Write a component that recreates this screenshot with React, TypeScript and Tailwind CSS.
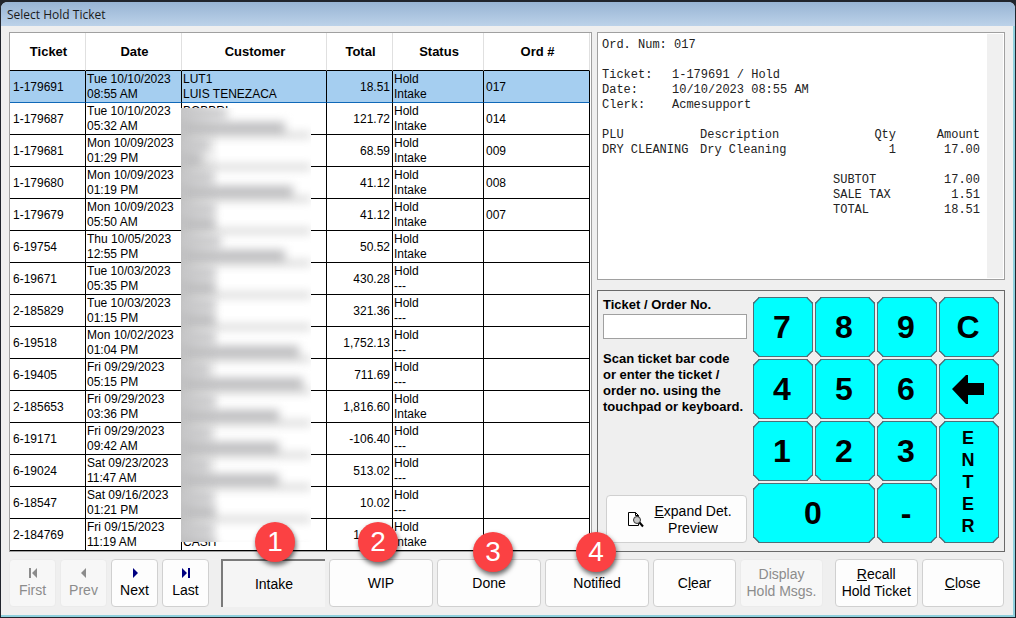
import { Fragment } from "react";
import type { ReactNode } from "react";

interface Ticket {
    id: string;
    day: string;
    time: string;
    customer?: string[];
    total: string;
    stage: string;
    order: string;
}

const tickets: Ticket[] = [
    { id: "1-179691", day: "Tue 10/10/2023", time: "08:55 AM", customer: ["LUT1", "LUIS TENEZACA"], total: "18.51", stage: "Intake", order: "017" },
    { id: "1-179687", day: "Tue 10/10/2023", time: "05:32 AM", customer: ["BOBBRI", ""], total: "121.72", stage: "Intake", order: "014" },
    { id: "1-179681", day: "Mon 10/09/2023", time: "01:29 PM", total: "68.59", stage: "Intake", order: "009" },
    { id: "1-179680", day: "Mon 10/09/2023", time: "01:19 PM", total: "41.12", stage: "Intake", order: "008" },
    { id: "1-179679", day: "Mon 10/09/2023", time: "05:50 AM", total: "41.12", stage: "Intake", order: "007" },
    { id: "6-19754", day: "Thu 10/05/2023", time: "12:55 PM", total: "50.52", stage: "Intake", order: "" },
    { id: "6-19671", day: "Tue 10/03/2023", time: "05:35 PM", total: "430.28", stage: "---", order: "" },
    { id: "2-185829", day: "Tue 10/03/2023", time: "01:15 PM", total: "321.36", stage: "---", order: "" },
    { id: "6-19518", day: "Mon 10/02/2023", time: "01:04 PM", total: "1,752.13", stage: "---", order: "" },
    { id: "6-19405", day: "Fri 09/29/2023", time: "05:15 PM", total: "711.69", stage: "---", order: "" },
    { id: "2-185653", day: "Fri 09/29/2023", time: "03:36 PM", total: "1,816.60", stage: "Intake", order: "" },
    { id: "6-19171", day: "Fri 09/29/2023", time: "09:42 AM", total: "-106.40", stage: "---", order: "" },
    { id: "6-19024", day: "Sat 09/23/2023", time: "11:47 AM", total: "513.02", stage: "---", order: "" },
    { id: "6-18547", day: "Sat 09/16/2023", time: "01:21 PM", total: "10.02", stage: "---", order: "" },
    { id: "2-184769", day: "Fri 09/15/2023", time: "11:19 AM", customer: ["", "CASH"], total: "100.00", stage: "Intake", order: "" },
];

// Redacted customer names: width of each smudged line, one pair per row
const smudges = [
    [46, 104], [28, 20], [32, 112], [34, 34], [40, 104], [34, 34], [34, 34],
    [34, 118], [28, 122], [34, 98], [30, 98], [28, 98], [32, 34], [32, 34],
];

const columns = [
    { label: "Ticket", width: "w-[76px]" },
    { label: "Date", width: "w-[96px]" },
    { label: "Customer", width: "w-[145px]" },
    { label: "Total", width: "w-[66px]" },
    { label: "Status", width: "w-[91px]" },
    { label: "Ord #", width: "w-[106px]" },
];

function TicketTable() {
    return (
        <div className="relative border border-[#a0a0a0] bg-white pr-px">
            <table className="w-full table-fixed border-separate border-spacing-0 text-xs leading-[15px]">
                <thead>
                    <tr className="h-[38px]">
                        {columns.map((c) => (
                            <th key={c.label} scope="col" className={`${c.width} border-r border-b border-r-[#e0e0e0] border-b-black pl-[2px] text-[13px] font-bold`}>
                                {c.label}
                            </th>
                        ))}
                    </tr>
                </thead>
                <tbody>
                    {tickets.map((t, i) => {
                        const cell = `h-8 overflow-hidden border-r border-b border-r-black whitespace-nowrap ${i === 0 ? "border-b-[#1068b8] bg-[#a5cef0]" : "border-b-black"}`;
                        return (
                            <tr key={t.id}>
                                <td className={`${cell} pt-[2px] pl-[3px]`}>{t.id}</td>
                                <td className={`${cell} pl-px`}>{t.day}<br />{t.time}</td>
                                <td className={`${cell} pt-px pl-px align-top`}>
                                    {t.customer?.map((line, n) => (
                                        <div key={n} className="h-[15px]">{line}</div>
                                    ))}
                                </td>
                                <td className={`${cell} pt-[2px] pr-[2px] text-right`}>{t.total}</td>
                                <td className={`${cell} pl-px`}>Hold<br />{t.stage}</td>
                                <td className={`${cell} pt-[2px] pl-[2px]`}>{t.order}</td>
                            </tr>
                        );
                    })}
                </tbody>
            </table>

            {/* Privacy smudge over the customer names */}
            <div className="absolute top-[75px] bottom-[9px] left-[171px] w-[130px] overflow-hidden bg-white" aria-hidden="true">
                <div className="absolute inset-y-0 left-0 w-10 bg-linear-to-r from-[#b4b4b4] to-transparent opacity-80" />
                {smudges.map(([a, b], i) => (
                    <div key={i} className="relative h-8 blur-[5px]">
                        <div className="h-[10px] bg-[#c6c6c8]" style={{ width: a }} />
                        <div className="mt-1 h-[10px] bg-[#bcbcbe]" style={{ width: b }} />
                        <div className="mt-px h-1 bg-[#c4c4c4]" />
                    </div>
                ))}
            </div>
        </div>
    );
}

function Receipt() {
    const info = [
        ["Ticket:", "1-179691 / Hold"],
        ["Date:", "10/10/2023 08:55 AM"],
        ["Clerk:", "Acmesupport"],
    ];
    const sums = [
        ["SUBTOT", "17.00"],
        ["SALE TAX", "1.51"],
        ["TOTAL", "18.51"],
    ];

    return (
        <div className="flex h-[248px] border border-[#a0a0a0] bg-white p-px font-['Liberation_Mono',monospace] text-xs leading-[15px] text-[#222]">
            <div className="flex-1 pt-1 pr-[7px] pl-[3px]">
                <p>Ord. Num: 017</p>
                <dl className="mt-[15px] grid grid-cols-[70px_1fr]">
                    {info.map(([k, v]) => (
                        <Fragment key={k}>
                            <dt>{k}</dt>
                            <dd>{v}</dd>
                        </Fragment>
                    ))}
                </dl>
                <table className="mt-[15px] w-full">
                    <thead>
                        <tr className="text-left">
                            <th className="w-[98px] p-0 font-normal">PLU</th>
                            <th className="p-0 font-normal">Description</th>
                            <th className="p-0 text-right font-normal">Qty</th>
                            <th className="w-[84px] p-0 text-right font-normal">Amount</th>
                        </tr>
                    </thead>
                    <tbody>
                        <tr>
                            <td className="p-0 whitespace-nowrap">DRY CLEANING</td>
                            <td className="p-0">Dry Cleaning</td>
                            <td className="p-0 text-right">1</td>
                            <td className="p-0 text-right">17.00</td>
                        </tr>
                    </tbody>
                </table>
                <dl className="mt-[15px] ml-auto grid w-[147px] grid-cols-[1fr_auto]">
                    {sums.map(([k, v]) => (
                        <Fragment key={k}>
                            <dt>{k}</dt>
                            <dd className="text-right">{v}</dd>
                        </Fragment>
                    ))}
                </dl>
            </div>
            <div className="w-4 bg-[#f0f0f0]" />
        </div>
    );
}

function Key({ children, label, className = "h-[60px] text-[32px]" }: { children: ReactNode; label?: string; className?: string }) {
    return (
        <button
            type="button"
            aria-label={label}
            className={`flex items-center justify-center rounded-[6px] border border-[#4d6f78] bg-[#00ffff] pr-[2px] font-bold text-black [corner-shape:bevel] ${className}`}
        >
            {children}
        </button>
    );
}

function Keypad() {
    return (
        <div className="grid w-[246px] shrink-0 grid-cols-4 gap-[2px]">
            <Key>7</Key>
            <Key>8</Key>
            <Key>9</Key>
            <Key>C</Key>
            <Key>4</Key>
            <Key>5</Key>
            <Key>6</Key>
            <Key label="Backspace">
                <svg width="32" height="30" viewBox="0 0 32 30" aria-hidden="true">
                    <path d="M0 15 14 1h2v8h16v12H16v9h-2Z" fill="#000" />
                </svg>
            </Key>
            <Key>1</Key>
            <Key>2</Key>
            <Key>3</Key>
            <Key label="Enter" className="row-span-2 flex-col text-lg leading-[22px]">
                {["E", "N", "T", "E", "R"].map((ch, i) => (
                    <span key={i}>{ch}</span>
                ))}
            </Key>
            <Key className="col-span-2 h-[60px] text-[32px]">0</Key>
            <Key>-</Key>
        </div>
    );
}

function EntryPanel() {
    return (
        <div className="flex border border-[#696969] pt-[6px] pr-[5px] pb-2 pl-[5px]">
            <div className="flex flex-1 flex-col pr-[6px] text-[13px] leading-4 font-bold">
                <label htmlFor="ticket-no">Ticket / Order No.</label>
                <input id="ticket-no" type="text" className="mt-px h-[25px] w-full border border-[#a0a0a0] bg-white px-1 font-normal outline-none" />
                <p className="mt-3 whitespace-nowrap">
                    Scan ticket bar code<br />
                    or enter the ticket /<br />
                    order no. using the<br />
                    touchpad or keyboard.
                </p>
                <button type="button" className="mt-auto ml-[3px] flex h-12 items-center justify-center gap-[10px] rounded border border-[#d0d0d0] bg-[#fdfdfd] pt-px pl-[6px] text-sm leading-[17px] font-normal">
                    <svg width="17" height="17" viewBox="0 0 17 17" aria-hidden="true">
                        <path d="M1.5 1.5h7l3 3v10h-10Z" fill="#fff" stroke="#000" />
                        <path d="M8.5 1.5v3h3" fill="none" stroke="#000" />
                        <circle cx="10" cy="9" r="3.5" fill="#c8c8c8" stroke="#333" />
                        <path d="m12.5 11.5 3.5 4" stroke="#000" strokeWidth="2" />
                    </svg>
                    <span><u>E</u>xpand Det.<br />Preview</span>
                </button>
            </div>
            <Keypad />
        </div>
    );
}

const buttonBase = "h-12 w-full rounded border text-sm leading-[17px] whitespace-nowrap";
const buttonOn = "border-[#d0d0d0] bg-[#fdfdfd] text-black";
const buttonOff = "border-[#ebebeb] bg-[#f7f7f7] text-[#8c8c8c]";

function NavButton({ label, d, disabled }: { label: string; d: string; disabled?: boolean }) {
    return (
        <button type="button" disabled={disabled} className={`${buttonBase} flex flex-col items-center gap-1 pt-2 ${disabled ? buttonOff : buttonOn}`}>
            <svg width="10" height="10" viewBox="0 0 10 10" aria-hidden="true">
                <path d={d} fill={disabled ? "#8c8c8c" : "#000080"} />
            </svg>
            {label}
        </button>
    );
}

function Badge({ n, className }: { n: number; className: string }) {
    return (
        <span className={`pointer-events-none absolute z-10 flex size-10 items-center justify-center rounded-full bg-[#fb4143] text-[28px] leading-none text-white shadow-[1px_3px_5px_rgba(0,0,0,0.6)] ${className}`}>
            {n}
        </span>
    );
}

function Toolbar() {
    return (
        <div className="mt-[7px] grid grid-cols-[200fr_602fr_169fr] gap-3 pr-px">
            <div className="grid grid-cols-4 gap-1">
                <NavButton label="First" disabled d="M1 0h2v10H1ZM9 0v10L4 5Z" />
                <NavButton label="Prev" disabled d="M7 0v10L2 5Z" />
                <NavButton label="Next" d="M3 0v10l5-5Z" />
                <NavButton label="Last" d="M1 0v10l5-5ZM7 0h2v10H7Z" />
            </div>
            <div className="grid grid-cols-[104fr_104fr_104fr_104fr_83fr_83fr] gap-1">
                <div className="relative">
                    <button type="button" aria-pressed="true" className="h-12 w-full border-t-2 border-l-2 border-[#7a7a7a] bg-[#f5f5f5] text-sm">
                        Intake
                    </button>
                    <Badge n={1} className="-top-[37px] left-[34px]" />
                </div>
                <div className="relative">
                    <button type="button" className={`${buttonBase} ${buttonOn}`}>WIP</button>
                    <Badge n={2} className="-top-[37px] left-[29px]" />
                </div>
                <div className="relative">
                    <button type="button" className={`${buttonBase} ${buttonOn}`}>Done</button>
                    <Badge n={3} className="-top-[27px] left-[36px]" />
                </div>
                <div className="relative">
                    <button type="button" className={`${buttonBase} ${buttonOn}`}>Notified</button>
                    <Badge n={4} className="-top-[27px] left-[31px]" />
                </div>
                <button type="button" className={`${buttonBase} ${buttonOn}`}>C<u>l</u>ear</button>
                <button type="button" disabled className={`${buttonBase} ${buttonOff}`}>Display<br />Hold Msgs.</button>
            </div>
            <div className="grid grid-cols-2 gap-1">
                <button type="button" className={`${buttonBase} ${buttonOn}`}><u>R</u>ecall<br />Hold Ticket</button>
                <button type="button" className={`${buttonBase} ${buttonOn}`}><u>C</u>lose</button>
            </div>
        </div>
    );
}

export default function App() {
    return (
        <div className="min-h-dvh bg-[#20242c] font-['Liberation_Sans',Arial,sans-serif] text-black">
            <div className="flex min-h-dvh flex-col rounded-t-lg border border-[#20242c] border-t-2 bg-[#efefef]">
                <h1 className="h-6 rounded-t-md bg-linear-to-b from-[#98b4d4] to-[#bcd2e9] pl-[6px] font-['Open_Sans',sans-serif] text-xs leading-[26px] text-[#1a1a1a]">
                    Select Hold Ticket
                </h1>
                <main className="flex-1 border-r-2 border-b-2 border-[#8fd0dd] pt-[6px] pr-2 pl-2">
                    <div className="grid grid-cols-[583fr_408fr] gap-[5px]">
                        <TicketTable />
                        <div className="flex flex-col justify-between">
                            <Receipt />
                            <EntryPanel />
                        </div>
                    </div>
                    <Toolbar />
                </main>
            </div>
        </div>
    );
}
